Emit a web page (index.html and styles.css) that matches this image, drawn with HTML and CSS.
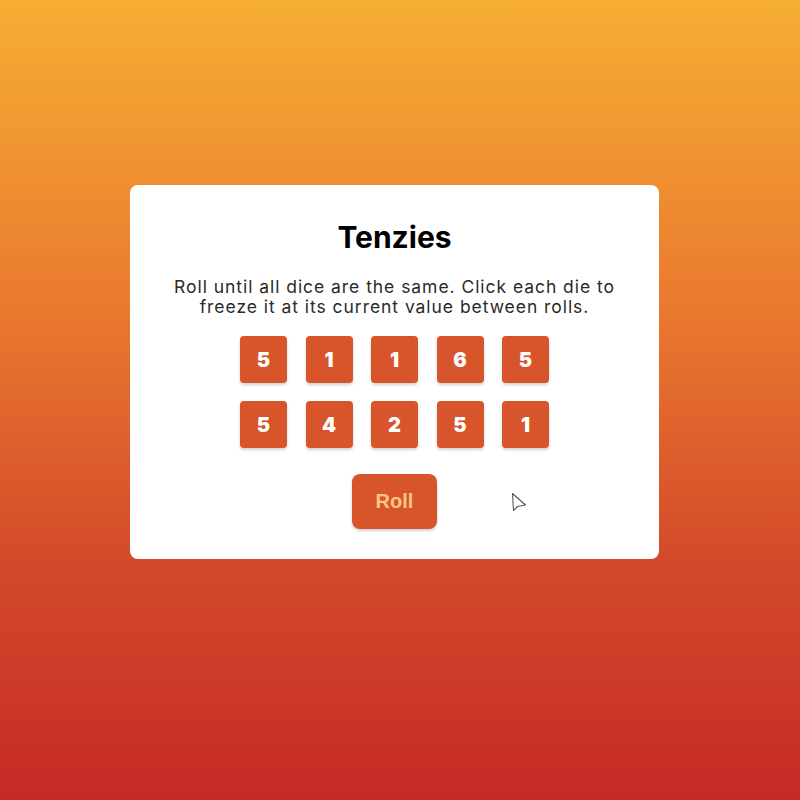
FILE: index.html
```html
<!DOCTYPE html>
<html lang="en">
<head>
    <meta charset="utf-8">
    <title>Tenzies</title>
    <link rel="stylesheet" href="styles.css">
</head>
<body>

<main class="board">
    <h1 class="title">Tenzies</h1>
    <p class="instructions">Roll until all dice are the same. Click each die to freeze it at its current value between rolls.</p>

    <div class="dice">
        <div class="die">5</div>
        <div class="die">1</div>
        <div class="die">1</div>
        <div class="die">6</div>
        <div class="die">5</div>
        <div class="die">5</div>
        <div class="die">4</div>
        <div class="die">2</div>
        <div class="die">5</div>
        <div class="die">1</div>
    </div>

    <button type="button" class="roll">Roll</button>

    <svg class="pointer" width="16" height="21" viewBox="0 0 16 21">
        <path d="M1.5 1.5 L2.5 18.5 L6.5 14.5 L14.5 13 Z" fill="#fff" stroke="#555" stroke-width="1.1" stroke-linejoin="round"/>
    </svg>
</main>

</body>
</html>
```

FILE: styles.css
```css
html {
    height: 100%;
}

body {
    margin: 0;
    min-height: 100%;
    background: linear-gradient(to bottom, #f6ae33 0%, #e9772f 40%, #d34a2a 70%, #c62a27 100%);
    font-family: Inter, "Noto Sans", sans-serif;
    padding-top: 185px;
    box-sizing: border-box;
}

.board {
    position: relative;
    width: 529px;
    height: 374px;
    margin-left: 130px;
    background: #fff;
    border-radius: 8px;
    box-sizing: border-box;
    display: flex;
    flex-direction: column;
    align-items: center;
    padding-top: 34px;
}

.title {
    margin: 0;
    font-size: 30px;
    font-weight: 700;
    line-height: 36px;
    color: #000;
}

.instructions {
    margin: 22px 0 0;
    width: 470px;
    text-align: center;
    font-size: 17.5px;
    font-weight: 400;
    letter-spacing: 0.95px;
    line-height: 20px;
    color: #2a2a2a;
}

.dice {
    margin-top: 19px;
    display: grid;
    grid-template-columns: repeat(5, 47px);
    gap: 18px 18.5px;
}

.die {
    height: 47px;
    display: flex;
    align-items: center;
    justify-content: center;
    background: #d8542a;
    border-radius: 4px;
    box-shadow: 0 2px 3px rgba(0, 0, 0, 0.18);
    color: #fff;
    font-size: 20px;
    font-weight: 900;
}

.roll {
    margin-top: 26px;
    width: 85px;
    height: 55px;
    border: none;
    border-radius: 8px;
    background: #d8542a;
    box-shadow: 0 2px 3px rgba(0, 0, 0, 0.18);
    color: #fbc588;
    font: bold 20px "Liberation Sans", Arial, sans-serif;
}

.pointer {
    position: absolute;
    left: 381px;
    top: 307px;
}
```
